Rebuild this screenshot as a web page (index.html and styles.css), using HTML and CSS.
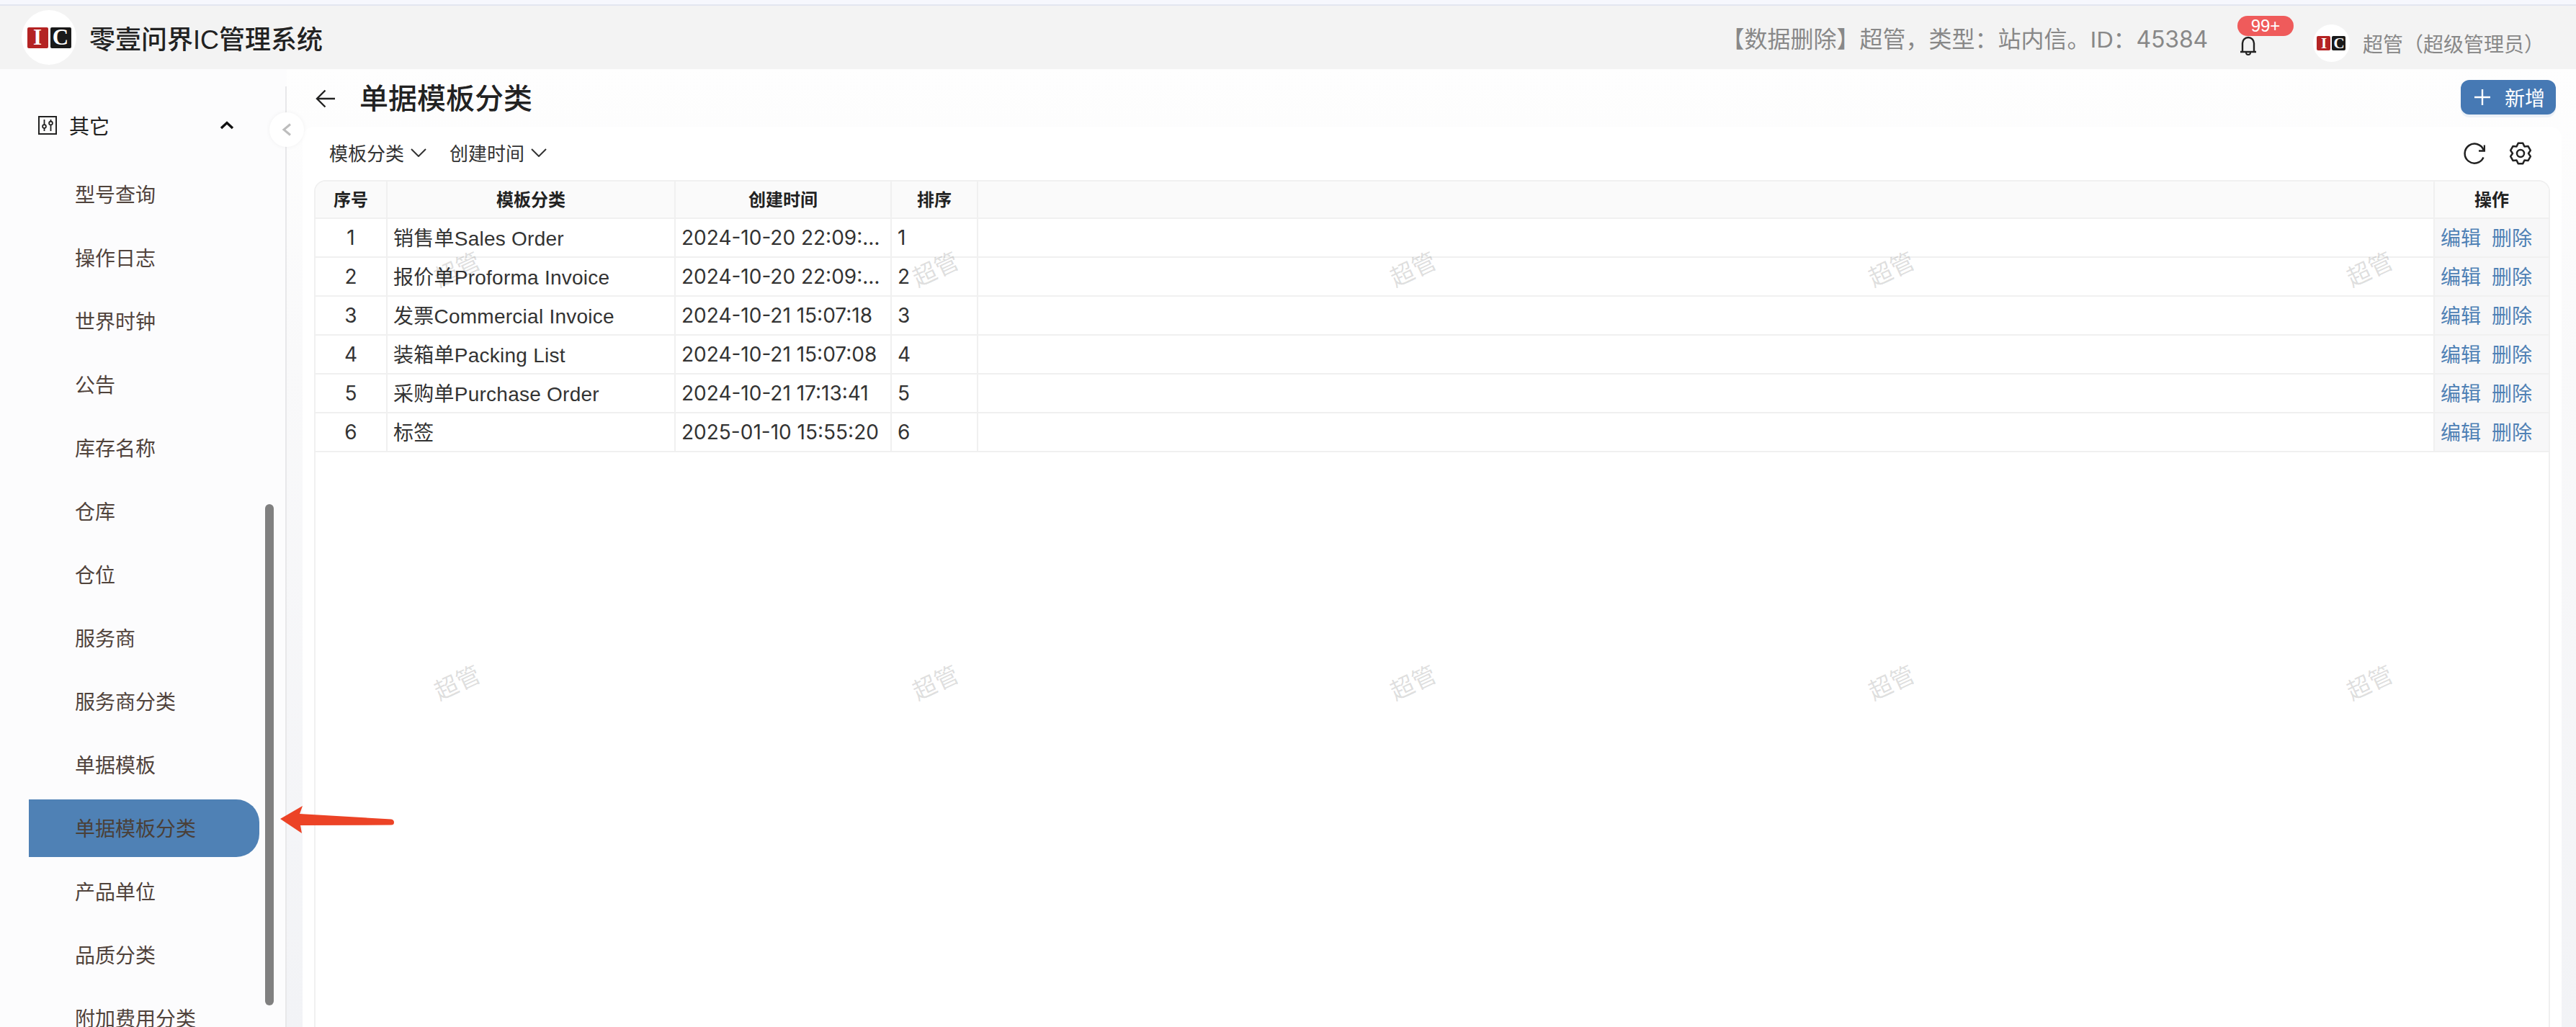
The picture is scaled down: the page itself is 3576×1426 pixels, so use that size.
FILE: index.html
```html
<!DOCTYPE html>
<html lang="zh">
<head>
<meta charset="utf-8">
<title>单据模板分类</title>
<link rel="stylesheet" href="styles.css">
</head>
<body>
<div class="app">
  <header class="topbar">
    <div class="brand">
      <div class="avatar avatar-lg"><div class="ic ic-lg"><span class="ic-i">I</span><span class="ic-c">C</span></div></div>
      <div class="brand-name">零壹问界IC管理系统</div>
    </div>
    <div class="top-right">
      <div class="notice">【数据删除】超管，类型：站内信。ID：<span class="num">45384</span></div>
      <div class="bell">
        <svg class="bell-icon" viewBox="0 0 24 28" width="24" height="28"><path d="M4 23V11a8 8 0 0 1 16 0v12M1 23h22" fill="none" stroke="#222" stroke-width="2.4"/><path d="M9 24a3 3 0 0 0 6 0" fill="none" stroke="#222" stroke-width="2"/></svg>
        <span class="badge">99+</span>
      </div>
      <div class="user">
        <div class="avatar avatar-sm"><div class="ic ic-sm"><span class="ic-i">I</span><span class="ic-c">C</span></div></div>
        <div class="user-name">超管（超级管理员）</div>
      </div>
    </div>
  </header>
  <div class="main">
    <aside class="sidebar">
      <div class="group">
        <svg class="group-icon" viewBox="0 0 26 26" width="26" height="26"><rect x="1" y="1" width="24" height="24" fill="none" stroke="#222" stroke-width="2"/><path d="M8.5 5v16M17.5 5v16" stroke="#222" stroke-width="1.8"/><circle cx="8.5" cy="14.500" r="2.400" fill="#fff" stroke="#222" stroke-width="1.800"/><circle cx="17.500" cy="10" r="2.400" fill="#fff" stroke="#222" stroke-width="1.800"/></svg>
        <span class="group-label">其它</span>
        <svg class="group-chevron" viewBox="0 0 20 12" width="20" height="12"><path d="M2 10l8-7.500 8 7.500" fill="none" stroke="#111" stroke-width="3.400"/></svg>
      </div>
      <nav class="menu">
        <a class="menu-item">型号查询</a>
        <a class="menu-item">操作日志</a>
        <a class="menu-item">世界时钟</a>
        <a class="menu-item">公告</a>
        <a class="menu-item">库存名称</a>
        <a class="menu-item">仓库</a>
        <a class="menu-item">仓位</a>
        <a class="menu-item">服务商</a>
        <a class="menu-item">服务商分类</a>
        <a class="menu-item">单据模板</a>
        <a class="menu-item active">单据模板分类</a>
        <a class="menu-item">产品单位</a>
        <a class="menu-item">品质分类</a>
        <a class="menu-item">附加费用分类</a>
      </nav>
      <div class="scroll-thumb"></div>
    </aside>
    <div class="collapse">
      <svg viewBox="0 0 14 18" width="14" height="18"><path d="M12 1.500L3 9l9 7.500" fill="none" stroke="#bdbdbd" stroke-width="3"/></svg>
    </div>
    <section class="content">
      <div class="page-head">
        <svg class="back" viewBox="0 0 28 26" width="28" height="26"><path d="M27 13H2M13.500 1.500L2 13l11.500 11.500" fill="none" stroke="#222" stroke-width="2.400"/></svg>
        <h1 class="page-title">单据模板分类</h1>
        <button class="add-btn"><svg viewBox="0 0 22 22" width="22" height="22"><path d="M11 0v22M0 11h22" stroke="#fff" stroke-width="2.400"/></svg><span>新增</span></button>
      </div>
      <div class="card">
        <div class="toolbar">
          <div class="filter">模板分类<svg viewBox="0 0 22 12" width="22" height="12"><path d="M1 1l10 10L21 1" fill="none" stroke="#333" stroke-width="2"/></svg></div>
          <div class="filter">创建时间<svg viewBox="0 0 22 12" width="22" height="12"><path d="M1 1l10 10L21 1" fill="none" stroke="#333" stroke-width="2"/></svg></div>
          <div class="tools">
            <svg viewBox="0 0 30 30" width="30" height="30"><path d="M27.800 10.500A13.500 13.500 0 1 0 27.500 20.500" fill="none" stroke="#222" stroke-width="2.500"/><path d="M29 3.500V11.500H21" fill="none" stroke="#222" stroke-width="2.500"/></svg>
            <svg viewBox="0 0 32 32" width="32" height="32"><path d="M12.740 1.870L19.260 1.870L21.500 6.470L26.600 6.110L29.870 11.760L27 16L29.870 20.240L26.600 25.890L21.500 25.530L19.260 30.130L12.740 30.130L10.500 25.530L5.400 25.890L2.130 20.240L5 16L2.130 11.760L5.400 6.110L10.500 6.470Z" fill="none" stroke="#222" stroke-width="2.500" stroke-linejoin="round"/><circle cx="16" cy="16" r="5" fill="none" stroke="#222" stroke-width="2.500"/></svg>
          </div>
        </div>
        <div class="table-wrap">
          <table class="grid">
            <colgroup><col class="c-no"><col class="c-type"><col class="c-time"><col class="c-sort"><col class="c-fill"><col class="c-op"></colgroup>
            <thead>
              <tr><th>序号</th><th>模板分类</th><th>创建时间</th><th>排序</th><th></th><th>操作</th></tr>
            </thead>
            <tbody>
              <tr><td class="center digits">1</td><td>销售单Sales Order</td><td class="digits">2024-10-20 22:09:…</td><td class="digits">1</td><td></td><td class="ops"><a>编辑</a><a>删除</a></td></tr>
              <tr><td class="center digits">2</td><td>报价单Proforma Invoice</td><td class="digits">2024-10-20 22:09:…</td><td class="digits">2</td><td></td><td class="ops"><a>编辑</a><a>删除</a></td></tr>
              <tr><td class="center digits">3</td><td>发票Commercial Invoice</td><td class="digits">2024-10-21 15:07:18</td><td class="digits">3</td><td></td><td class="ops"><a>编辑</a><a>删除</a></td></tr>
              <tr><td class="center digits">4</td><td>装箱单Packing List</td><td class="digits">2024-10-21 15:07:08</td><td class="digits">4</td><td></td><td class="ops"><a>编辑</a><a>删除</a></td></tr>
              <tr><td class="center digits">5</td><td>采购单Purchase Order</td><td class="digits">2024-10-21 17:13:41</td><td class="digits">5</td><td></td><td class="ops"><a>编辑</a><a>删除</a></td></tr>
              <tr><td class="center digits">6</td><td>标签</td><td class="digits">2025-01-10 15:55:20</td><td class="digits">6</td><td></td><td class="ops"><a>编辑</a><a>删除</a></td></tr>
            </tbody>
          </table>
        </div>
      </div>
    </section>
  </div>
  <svg class="callout" viewBox="0 0 160 40" width="160" height="40"><path d="M1 19L32 1L28 12L155 19.500Q159 20 159 24Q159 27.500 155 27.500L29 28L31 39Z" fill="#ec4326"/></svg>
  <div class="watermarks">
    <span>超管</span><span>超管</span><span>超管</span><span>超管</span><span>超管</span>
    <span>超管</span><span>超管</span><span>超管</span><span>超管</span><span>超管</span>
  </div>
</div>
</body>
</html>
```
FILE: styles.css
```css
* { box-sizing: border-box; }
html, body { margin: 0; padding: 0; height: 100%; overflow: hidden; }
body {
  font-family: "Liberation Sans", "Noto Sans CJK SC", sans-serif;
  color: #333;
  background: #f6f7fd;
}
.app {
  position: relative;
  height: 1426px;
  padding-top: 6px;
  display: flex;
  flex-direction: column;
  overflow: hidden;
}
.topbar {
  flex: none;
  height: 90px;
  border-top: 2px solid #e3e6f0;
  background: #f3f3f3;
  display: flex;
  align-items: center;
  justify-content: space-between;
  padding: 0 44px 0 30px;
}
.brand { display: flex; align-items: center; gap: 18px; }
.brand-name { font-size: 36px; font-weight: 500; color: #222; }
.avatar {
  border-radius: 50%;
  background: #fff;
  display: flex;
  align-items: center;
  justify-content: center;
  flex: none;
}
.avatar-lg { width: 76px; height: 76px; }
.avatar-sm { width: 51px; height: 52px; }
.ic { display: flex; font-family: "Liberation Serif", serif; font-weight: 700; color: #fff; }
.ic span { display: flex; align-items: center; justify-content: center; border-radius: 2px; }
.ic-i { background: #b42323; }
.ic-c { background: #1a1a1a; }
.ic-lg { gap: 3px; font-size: 31px; }
.ic-lg span { width: 29px; height: 29px; }
.ic-sm { gap: 2px; font-size: 21px; }
.ic-sm span { width: 19px; height: 20px; }
.top-right { display: flex; align-items: center; }
.notice { font-size: 32px; color: #888; margin-right: 44px; }
.num { font-family: Inter, "Liberation Sans", sans-serif; letter-spacing: -.2px; }
.bell { position: relative; width: 24px; height: 28px; margin: 22px 78px 0 0; }
.bell-icon { display: block; }
.badge {
  position: absolute;
  left: -3px;
  top: -27px;
  width: 78px;
  height: 28px;
  border-radius: 14px;
  background: #ef5b5b;
  color: #fff;
  font-size: 24px;
  line-height: 28px;
  text-align: center;
}
.user { display: flex; align-items: center; gap: 18px; padding-top: 16px; }
.user-name { font-size: 28px; color: #888; }
.main { flex: 1; min-height: 0; display: flex; position: relative; }
.sidebar {
  position: relative;
  flex: none;
  width: 398px;
  padding-top: 38px;
  background: #fcfcfd;
  overflow: hidden;
}
.sidebar::after {
  content: "";
  position: absolute;
  right: 0;
  top: 24px;
  bottom: 0;
  width: 2px;
  background: #e8e8ea;
}
.group {
  height: 80px;
  display: flex;
  align-items: center;
  padding-left: 53px;
  font-size: 28px;
  color: #222;
}
.group-label { margin-left: 17px; }
.group-chevron { margin-left: 153px; }
.menu { margin-top: 16px; display: flex; flex-direction: column; gap: 8px; }
.menu-item {
  flex: none;
  width: 320px;
  height: 80px;
  margin-left: 40px;
  padding: 0 0 3px 64px;
  display: flex;
  align-items: center;
  font-size: 28px;
  color: #50433c;
}
.menu-item.active { background: #4f81b5; border-radius: 0 32px 32px 0; color: #4a4038; }
.scroll-thumb {
  position: absolute;
  left: 368px;
  top: 604px;
  width: 12px;
  height: 696px;
  border-radius: 6px;
  background: #808080;
}
.collapse {
  position: absolute;
  left: 374px;
  top: 60px;
  width: 48px;
  height: 48px;
  border-radius: 50%;
  background: #fff;
  box-shadow: 0 0 6px rgba(0, 0, 0, .05);
  display: flex;
  align-items: center;
  justify-content: center;
  z-index: 2;
}
.content {
  flex: 1;
  min-width: 0;
  display: flex;
  flex-direction: column;
  padding: 0 20px 0 22px;
  background: linear-gradient(180deg, #fefefe 0%, #f9f9fa 30%, #f2f3f6 100%);
}
.page-head {
  flex: none;
  height: 80px;
  display: flex;
  align-items: center;
  padding: 2px 8px 0 18px;
}
.back { flex: none; }
.page-title { margin: 0 0 0 33px; font-size: 40px; font-weight: 500; color: #222; line-height: 1; }
.add-btn {
  margin: -4px 0 0 auto;
  width: 132px;
  height: 48px;
  border: 0;
  border-radius: 12px;
  background: #4679b4;
  box-shadow: 0 4px 0 #ecf1f7;
  color: #fff;
  font: inherit;
  font-size: 28px;
  display: flex;
  align-items: center;
  padding: 0 0 0 19px;
  gap: 20px;
}
.card {
  flex: 1;
  min-height: 0;
  background: #fff;
  border-radius: 16px 16px 0 0;
  padding: 0 16px;
  display: flex;
  flex-direction: column;
}
.toolbar {
  flex: none;
  height: 74px;
  display: flex;
  align-items: center;
  padding: 0 25px 3px 21px;
  font-size: 26px;
  color: #333;
}
.filter { display: flex; align-items: center; gap: 9px; margin-right: 32px; }
.tools { margin-left: auto; display: flex; align-items: center; gap: 33px; padding-top: 3px; }
.table-wrap {
  flex: 1;
  min-height: 0;
  border: 2px solid #f0f0f0;
  border-bottom: 0;
  border-radius: 16px 16px 0 0;
  overflow: hidden;
}
.grid { width: 3100px; table-layout: fixed; border-collapse: separate; border-spacing: 0; }
.c-no { width: 100px; }
.c-type { width: 400px; }
.c-time { width: 300px; }
.c-sort { width: 120px; }
.c-fill { width: 2022px; }
.c-op { width: 158px; }
.grid th, .grid td {
  border-right: 2px solid #f0f0f0;
  border-bottom: 2px solid #f0f0f0;
  padding: 0 8px;
  white-space: nowrap;
  overflow: hidden;
}
.grid th:last-child, .grid td:last-child { border-right: 0; }
.grid th {
  height: 52px;
  padding-bottom: 3px;
  background: #fafafa;
  font-size: 24px;
  font-weight: 600;
  color: #222;
  text-align: center;
}
.grid td { height: 54px; padding-bottom: 2px; font-size: 28px; letter-spacing: .25px; color: #333; }
.grid td.digits { padding-bottom: 0; font-family: Inter, "Liberation Sans", sans-serif; letter-spacing: 0; }
.grid td.center { text-align: center; }
.grid td.ops { background: #f7f7f8; padding: 0 0 2px 8px; color: #4f81b5; letter-spacing: 0; }
.ops a { margin-right: 15px; }
.callout { position: absolute; left: 388px; top: 1118px; z-index: 3; }
.watermarks {
  position: absolute;
  inset: 0;
  pointer-events: none;
  display: grid;
  grid-template-columns: repeat(5, 663.7px);
  grid-auto-rows: 574px;
  padding: 85px 0 0 302px;
  z-index: 1;
}
.watermarks span {
  display: flex;
  align-items: center;
  justify-content: center;
  font-size: 33px;
  color: rgba(0, 0, 0, .14);
  transform: rotate(-25deg);
}
```
